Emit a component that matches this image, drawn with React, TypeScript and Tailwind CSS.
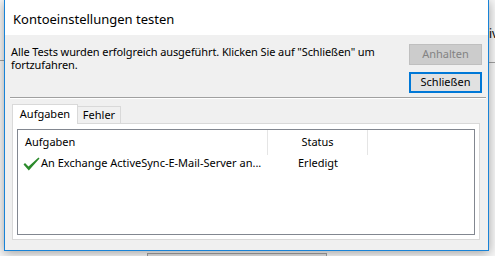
export default function App() {
  return (
    <div className="relative w-[495px] h-[256px] overflow-hidden bg-[#f6f6f6] pl-[4px] font-['Noto_Sans',sans-serif] text-[#000]">
      {/* background desktop bits */}
      <div className="absolute left-0 top-[60px] w-[4px] h-px bg-[#a0a0a0]" />
      <div className="absolute left-[489px] top-[27px] text-[12px] leading-[13px]">iv</div>
      <div className="absolute left-[489px] top-[62px] w-[6px] h-px bg-[#a0a0a0]" />
      <div className="absolute left-[147px] top-[253px] w-[180px] h-[10px] border border-[#a0a0a0] bg-[#e1e1e1]" />

      <div className="relative w-[485px] h-[251px] flex flex-col border-x border-b border-[#1883d7] shadow-[0_2px_10px_rgba(0,0,0,0.35)]">
        <div className="h-[35px] bg-white flex items-center pl-[8px] pt-[4px] text-[13px]">
          Kontoeinstellungen testen
        </div>
        <div className="flex-1 bg-[#f0f0f0] flex flex-col">
          <div className="flex pt-[9px] pl-[6px] pr-[6px]">
            <div className="text-[11px] tracking-[-0.1px] leading-[13px] w-[385px] pt-[1px]">
              Alle Tests wurden erfolgreich ausgeführt. Klicken Sie auf "Schließen" um fortzufahren.
            </div>
            <div className="ml-auto flex flex-col gap-[7px] w-[73px]">
              <div className="h-[21px] bg-[#cccccc] border border-[#bfbfbf] text-[#838383] text-[11px] flex items-center justify-center">
                Anhalten
              </div>
              <div className="h-[21px] bg-[#e1e1e1] border-2 border-[#0078d7] text-[11px] flex items-center justify-center">
                Schließen
              </div>
            </div>
          </div>
          <div className="mt-[4px] ml-[5px] mr-[2px] h-[2px] border-t border-[#a0a0a0] border-b border-b-white" />
          <div className="flex items-end pl-[7px] mt-[5px] text-[11px]">
            <div className="relative z-10 -mb-px h-[20px] w-[66px] bg-white border border-b-0 border-[#d9d9d9] flex items-center justify-center">
              Aufgaben
            </div>
            <div className="h-[17px] w-[43px] bg-[#f0f0f0] border border-l-0 border-b-0 border-[#d9d9d9] flex items-center justify-center">
              Fehler
            </div>
          </div>
          <div className="ml-[7px] mr-[8px] h-[117px] bg-white border border-[#d9d9d9] pt-[5px] px-[4px] pb-[4px] flex">
            <div className="flex-1 border border-[#828790] bg-white flex flex-col text-[11px]">
              <div className="flex h-[25px]">
                <div className="w-[250px] pl-[7px] flex items-center border-r border-[#e5e5e5]">Aufgaben</div>
                <div className="w-[100px] flex items-center justify-center border-r border-[#e5e5e5]">Status</div>
              </div>
              <div className="flex h-[17px] items-center">
                <div className="w-[250px] pl-[5px] flex items-center">
                  <svg width="17" height="14" viewBox="0 0 17 14" className="shrink-0">
                    <path d="M0.5 7.5 L2 6 L5.5 9.5 L15.5 0.5 L16.5 1.5 L5.8 13.5 Z" fill="#2b8a2b" />
                  </svg>
                  <span className="ml-[1px] whitespace-nowrap">An Exchange ActiveSync-E-Mail-Server an...</span>
                </div>
                <div className="w-[100px] flex justify-center">Erledigt</div>
              </div>
            </div>
          </div>
        </div>
      </div>
    </div>
  );
}
